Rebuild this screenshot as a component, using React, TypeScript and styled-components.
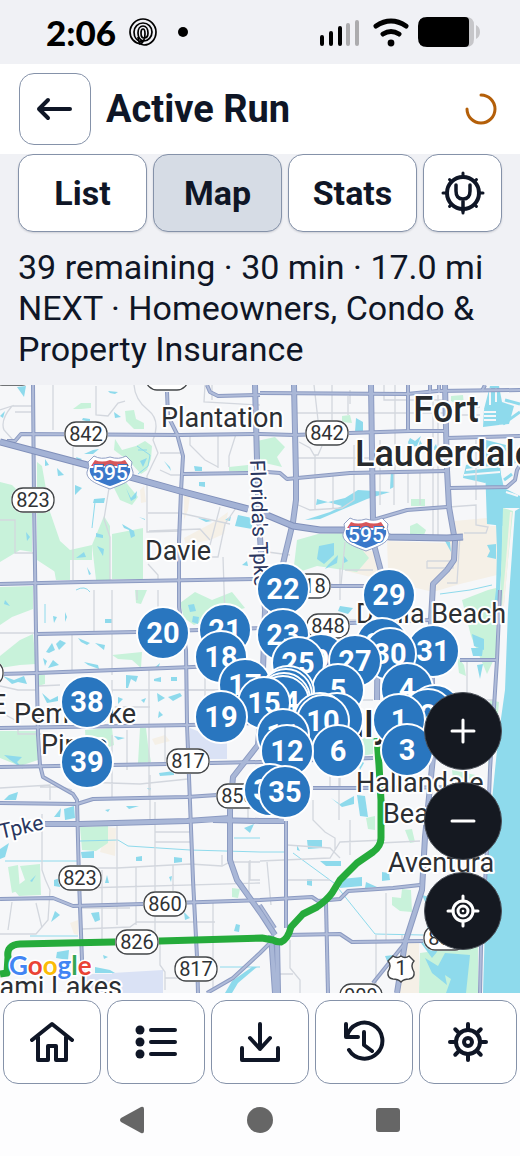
import React from "react";
import styled, { createGlobalStyle } from "styled-components";

const ink = "#0f1626";
const line = "#8592a9";

const GlobalStyle = createGlobalStyle`
  * { box-sizing: border-box; }
  body { margin: 0; background: #fdfdfe; color: ${ink}; font-family: Roboto, "Liberation Sans", sans-serif; }
  button { font: inherit; color: inherit; padding: 0; cursor: pointer; }
  svg { display: block; }
`;

const Screen = styled.div`
  display: flex;
  flex-direction: column;
  min-height: 100vh;
`;

const StatusBar = styled.div`
  display: flex;
  align-items: center;
  justify-content: space-between;
  height: 64px;
  padding: 0 40px 0 46px;
  background: #f0f1f5;
  color: #000;
`;

const StatusGroup = styled.div<{ $gap: number }>`
  display: flex;
  align-items: center;
  gap: ${(p) => p.$gap}px;
`;

const Clock = styled.span`
  font: 900 35px/40px Lato, sans-serif;
`;

const Header = styled.header`
  display: flex;
  align-items: center;
  gap: 15px;
  height: 90px;
  padding: 0 22px 0 19px;
  background: #fff;
`;

const Title = styled.h1`
  flex: 1;
  margin: 0;
  font-size: 38px;
  line-height: 44px;
  font-weight: 700;
`;

const OutlineButton = styled.button<{ $active?: boolean }>`
  display: flex;
  align-items: center;
  justify-content: center;
  border: 1px solid ${line};
  border-radius: 15px;
  background: ${(p) => (p.$active ? "#d6dce5" : "#fff")};
`;

const BackButton = styled(OutlineButton)`
  width: 72px;
  height: 72px;
`;

const Summary = styled.section`
  padding: 0 18px 15px;
  background: #f0f1f5;
`;

const Tabs = styled.nav`
  display: grid;
  grid-template-columns: repeat(3, 1fr) 79px;
  gap: 6px;
`;

const Tab = styled(OutlineButton)`
  height: 78px;
  font-size: 34px;
  font-weight: 700;
  box-shadow: 0 1px 2px rgba(15, 22, 38, 0.15);
`;

const Info = styled.p`
  margin: 15px 0 0;
  font-size: 34px;
  line-height: 41px;
`;

const MapArea = styled.main`
  position: relative;
  flex: 1;
  min-height: 420px;
  overflow: hidden;
  background: #f6f7f9;
`;

const MapDrawing = styled.svg`
  position: absolute;
  inset: 0;
  width: 100%;
  height: 100%;
`;

const Pin = styled.button`
  position: absolute;
  display: flex;
  align-items: center;
  justify-content: center;
  width: 54px;
  height: 54px;
  border: 2px solid #fff;
  border-radius: 50%;
  background: #2976bf;
  color: #fff;
  transform: translate(-50%, -50%);
  && { font-size: 29px; font-weight: 700; }
`;

const MapControls = styled.div`
  position: absolute;
  right: 18px;
  bottom: 43px;
  display: flex;
  flex-direction: column;
  gap: 12px;
`;

const RoundButton = styled.button`
  display: flex;
  align-items: center;
  justify-content: center;
  width: 78px;
  height: 78px;
  border: 1px solid #4a4f57;
  border-radius: 50%;
  background: #151921;
  && { color: #fff; }
`;

const BottomNav = styled.nav`
  display: grid;
  grid-template-columns: repeat(5, 1fr);
  gap: 6px;
  padding: 7px 3px 0;
  background: #fdfdfe;
`;

const NavButton = styled(OutlineButton)`
  height: 84px;
`;

const SystemBar = styled.div`
  display: flex;
  align-items: center;
  justify-content: center;
  gap: 88px;
  height: 72px;
  background: #fdfdfe;
`;

const SystemButton = styled.button`
  display: flex;
  width: 40px;
  height: 40px;
  align-items: center;
  justify-content: center;
  border: 0;
  background: none;
`;

/* ---------- map data ---------- */

const pins: [string, number, number][] = [
  ["22", 283, 589], ["29", 389, 595], ["21", 225, 630], ["20", 163, 633], ["23", 283, 635],
  ["28", 382, 644], ["31", 433, 651], ["30", 390, 654], ["18", 221, 657], ["27", 355, 661],
  ["9", 321, 660], ["25", 298, 663], ["17", 245, 685], ["4", 407, 689], ["5", 338, 690],
  ["24", 288, 692], ["16", 286, 695], ["13", 284, 699], ["14", 283, 702], ["38", 87, 702],
  ["15", 264, 703], ["33", 435, 711], ["2", 428, 715], ["19", 221, 717], ["7", 337, 719],
  ["8", 320, 719], ["1", 399, 720], ["10", 323, 721], ["11", 283, 735], ["3", 407, 750],
  ["6", 338, 751], ["12", 287, 751], ["39", 87, 762], ["34", 270, 790], ["35", 285, 792],
];
// Pins further south are drawn over the ones behind them.
const sortedPins = [...pins].sort((a, b) => a[2] - b[2]);

const greens = [
  "73,409 81,403 91,403 91,408 81,409", "125,411 134,410 136,419 144,423 144,429 134,429 126,421",
  "115,439 122,450 136,446 145,441 152,446 151,459 147,470 141,474 130,462 122,456 114,450",
  "0,482 12,485 32,505 32,552 20,550 0,562", "37,462 42,466 50,512 60,541 70,550 92,545 92,560 70,560 60,575 37,560",
  "112,484 124,480 138,497 132,505 120,500", "112,534 143,528 143,579 112,579", "104,516 110,526 110,580 96,580 92,545", "52,558 70,558 70,580 56,580", "229,467 248,465 248,471 229,471",
  "0,587 33,586 33,609 12,617 0,625", "0,656 20,640 33,634 36,664 20,665 0,668", "38,675 45,675 45,684 38,686",
  "135,590 147,590 141,604 136,603", "112,655 142,652 141,668 132,660 118,659",
  "0,731 36,731 38,760 20,766 0,758", "85,730 112,728 114,745 98,752 86,745", "140,728 146,728 148,745 151,762 138,763",
  "180,603 195,592 212,600 232,592 245,608 215,616 194,625 184,618", "257,441 275,437 285,447 277,457 282,467 265,463 257,456",
  "342,416 350,415 352,423 342,422", "451,396 463,395 464,405 458,405 451,401",
  "297,540 318,534 348,533 369,558 357,572 317,566 293,574",
  "411,499 425,499 425,506 411,506", "410,526 417,523 426,530 424,535 410,535", "462,600 488,590 496,588 496,655 487,674 471,636",
  "361,739 373,735 373,754 362,756", "457,656 464,665 466,676 459,673",
  "80,827 108,826 108,843 96,851 82,850", "8,867 18,865 20,890 12,893", "20,866 40,864 41,895 19,896 13,889 25,880",
  "232,888 240,889 238,898 232,897", "366,818 375,816 375,830 368,829", "405,830 412,829 415,842 410,843",
  "392,897 401,898 402,889 411,890 412,912 400,911 392,905", "420,953 478,945 478,993 419,993",
  "452,770 480,776 472,800 455,797", "490,700 499,702 495,750 488,770",
];

const beiges = [
  "387,541 447,543 454,521 487,518 490,526 497,526 497,575 460,584 433,592 346,571 352,545 374,552 382,570 388,568",
  "184,495 190,496 188,510 184,520", "214,522 228,512 224,534 210,540 186,545 184,538",
  "108,827 116,828 115,856 100,852", "405,942 419,940 419,993 398,993", "152,739 165,735 170,741 155,745",
  "140,490 144,486 146,502 141,503", "70,923 78,920 78,935 74,934",
];

const waters = [
  "17,387 26,386 24,397", "108,391 118,392 115,394 110,393", "0,416 5,411 3,418", "83,418 90,419 90,422 82,420", "114,412 121,417 115,418",
  "76,457 82,459 78,462", "84,454 93,450 99,449 93,454", "45,459 49,465 45,466", "57,468 64,475 58,476", "75,485 82,488 75,495",
  "94,499 105,498 104,503 93,503", "126,488 131,498 137,491 136,498 131,501", "164,461 170,467 171,471",
  "194,466 202,467 202,471 195,471", "199,482 205,482 205,487 199,486", "122,524 134,531 135,536 131,538 129,530 124,528",
  "139,517 145,520 145,519", "140,461 147,458 143,467", "96,533 103,535 103,538 96,537", "97,546 104,549 103,556",
  "76,558 84,552 86,557", "87,567 91,574 89,575", "26,532 30,537 27,541", "198,518 205,519 212,521 206,522",
  "225,520 231,516 230,521", "238,515 252,518 252,529 235,526", "242,565 247,561 248,566",
  "5,600 10,606 4,604", "53,616 57,617 54,623", "65,612 67,617 65,622", "105,619 112,619 112,623 105,623",
  "46,652 52,643 55,650 49,653", "56,644 60,640 66,643 59,650", "43,658 47,661 45,666", "48,668 53,660 59,665",
  "78,638 90,643 87,645 81,642", "95,643 105,645 104,650", "84,662 98,665 99,669 88,665",
  "188,605 194,604 196,611 190,612", "193,616 199,617 198,624 192,622", "3,676 14,680 24,676 27,684 18,682 12,684",
  "42,693 50,700 58,696 58,701 47,703", "126,675 138,676 136,682 131,679 128,688 126,688", "153,669 160,663 158,669",
  "154,679 161,677 161,682 154,681", "171,677 177,677 177,681 171,681", "118,697 123,699 118,704", "141,700 146,698 144,703",
  "157,693 165,698 158,702", "168,697 180,693 182,696 173,701", "158,718 163,715 159,711", "114,736 125,738 118,740",
  "4,755 22,757 17,762 23,769 10,760", "9,795 18,792 16,800 4,800", "159,773 174,771 174,775 160,776", "147,788 151,788 150,791",
  "54,817 61,808 60,817", "64,809 74,806 75,818 65,820", "105,810 110,809 108,812", "126,806 139,806 129,809",
  "0,849 9,843 5,857 0,859", "81,852 94,851 94,858 82,858", "136,857 142,856 142,861 136,861", "174,857 182,858 182,862 174,863",
  "107,875 109,883 105,883", "169,877 172,876 171,882", "30,881 36,875 32,882", "54,880 60,878 60,887 54,886",
  "51,922 55,911 60,915", "91,913 99,912 100,920 95,922", "184,912 190,918 185,920", "236,924 240,925 239,932 234,931",
  "57,952 69,950 68,960 56,958", "103,955 108,957 104,959", "95,967 110,970 115,973 95,973", "244,828 254,824 250,833",
  "317,499 316,505 345,498 358,490 390,492 367,499 353,505 320,519 305,520 330,512 342,506", "319,546 334,543 334,555 324,564 317,559",
  "344,556 348,561 344,563", "328,565 338,555 337,563 325,569", "356,418 363,422 363,431 355,432",
  "408,442 410,438 415,441 421,436 417,446 409,447", "432,450 436,444 438,450",
  "420,440 424,448 418,448", "391,470 394,472 394,487 390,489", "445,541 450,542 451,552",
  "490,386 499,386 502,402 514,406 509,424 497,425 488,424 484,409",
  "484,410 497,409 499,425 483,427", "486,440 506,445 504,460 488,465 480,455", "466,465 485,460 500,465 501,476 485,483 463,478",
  "485,466 500,470 504,488 520,496 520,508 503,508 503,526 487,524", "487,545 496,544 496,559 487,557 490,551",
  "496,524 503,510 502,560 500,590 496,622 492,622 496,590 497,550",
  "472,634 484,639 484,650 474,646", "471,648 483,648 482,656 473,656", "477,665 483,664 480,679",
  "340,606 353,608 348,614 338,611", "331,798 340,804 354,796 354,804 342,807", "357,757 364,763 360,770",
  "307,840 322,840 322,848 308,849", "297,845 300,851 297,850", "320,861 341,861 341,866 326,866",
  "307,879 312,879 312,886 307,885", "341,879 362,877 362,886 340,888", "366,882 377,887 365,888",
  "382,872 389,873 390,880 382,881", "385,956 394,955 394,961 387,961", "357,795 365,796 368,817 360,816",
  "425,958 438,966 445,953 470,955 466,993 446,993 451,979 445,975 447,985 432,973",
  "225,993 232,981 252,967 257,967 238,983 232,993",
];

const minorRoads = [
  "M53 385V430M73 440V580M96 386V415L108 416L118 403L125 401M134 385Q135 400 148 410T153 440L158 453Q152 465 147 476V532L180 531",
  "M12 406H33M0 410L12 406Q0 420 4 430L13 440M109 488L104 519L110 537V580M148 513H180L230 524M149 531L200 529L210 540",
  "M205 385L204 402L260 405M236 434L229 456V467M218 434V468M190 434V445L205 460L218 467M160 453H180M160 470L171 475H184",
  "M236 508L225 524L218 557H210M223 557L227 680M220 507L210 545M148 564L158 575V580M212 385V400",
  "M314 385L318 420M332 385V423M348 415V396M296 413H371M371 413H447M384 385V400H447M395 385V470M380 440V505M394 470V505M408 472V503M420 472V505M433 395V540M438 395V540",
  "M299 442L310 448L314 455H318L322 446M315 455V510M333 473V508M354 445V500L342 508L310 510L296 504M296 458H372",
  "M345 542L341 585M345 570H373M260 551L290 555M427 561H453V568H427V561M447 583H457L460 535M449 507L476 505V525L488 527L486 533H464",
  "M476 440V500M447 407H480M447 415H480M340 568V600M350 390V404",
  "M0 633H37M15 412H31M0 520H15V553H33M94 590V632M72 634V673M112 590V675M137 590V600M158 590V632",
  "M112 680V723M149 668V800M0 686L18 690H38M38 686L60 685M112 690H260M112 707H150M0 712L15 720M112 735V800M127 730V770M40 787H61L72 790M80 782L140 784L188 779M0 788L50 785V800",
  "M42 734H18V728M205 635V700M205 687V725M150 775V820M165 725V762M188 690H220",
  "M117 826V925M155 802V940M155 832H190M155 842H190M82 868H117L190 864L222 866L230 862H260M42 814V870Q45 880 50 890L48 920L36 934H0M8 930L12 902M36 903L42 928",
  "M83 888L260 883M136 867V925M173 865V900M82 929L130 927L137 922H215M213 902V990M160 941V965L165 972V990M82 908L130 908M102 870V940M183 940H250M195 978H165M222 865V855",
  "M248 790V820M249 861V899M260 880H250V860M313 800V820L325 832L335 838V850M350 820V855M260 861L330 858L340 842L385 840M340 700V790M339 757V820",
  "M280 800V820M267 862L271 905M290 940V968L300 980V993M386 893V940M376 935V993M402 935V950M287 845L330 848L340 858M280 974H293M287 880H330M380 843L420 841M402 940H425",
  "M467 660V750M460 700H495M460 720H495M320 620H380M315 700H373M306 780V800M330 745V790",
];

const majorRoads = [
  "M33 385L34 500L36 632L38 735L40 765L43 777L73 794L77 800L79 880L82 960L83 993",
  "M7 441H15L21 434L180 435L260 434L294 435L350 433L410 431L447 431",
  "M447 438L520 436",
  "M167 392L168 416L177 434L183 456L181 491L179 541V607L186 650L187 723L189 777L193 880L197 957L198 993",
  "M0 584L83 582L255 579L333 586L375 586",
  "M37 634L137 632L200 630L260 628L350 623L430 620",
  "M0 674L37 673L193 667L240 665",
  "M0 728L190 725L260 723",
  "M0 767L167 764L260 762L373 758",
  "M0 803L77 804L93 799L187 797L217 795",
  "M313 788H362L480 787",
  "M0 899L53 898L73 906L143 904L260 900L312 897L318 901L340 899L348 891L393 888L420 885",
  "M286 935L340 934L352 942L423 941",
  "M326 903L328 993",
  "M183 474L248 473",
  "M207 385L210 392L218 396L260 395",
  "M260 393L407 394L437 391L520 390",
  "M408 385V431M430 385V393M439 385V393",
  "M267 472L280 473L287 479L350 473L447 471",
  "M373 520L407 510L447 507",
  "M450 488L507 487L515 480L517 470L520 465",
  "M460 660H498",
  "M500 590L497 660L490 770L487 850L481 947L480 993",
  "M286 821V928",
  "M207 993L233 978L260 953L270 943",
  "M405 943L373 983",
  "M260 905L275 928",
  "M485 385L482 391",
];

const highways = [
  "M255 385L257 460L259 520L262 570L265 610L262 700L258 745L240 768L233 777L230 810V860L237 880L262 915L275 935",
  "M294 385L296 477V500L293 522L285 555L275 600",
  "M371 385L373 520L374 545L382 575L378 610L377 700",
  "M445 385L447 470L449 507L455 541L454 560L447 570L433 584L431 620L433 757L425 837L422 890L405 943L397 993",
  "M45 824L80 824L187 821L230 818M213 820L260 821H284",
  "M271 935L275 993M277 940L278 993",
];

const bigHighways = ["M0 442L87 465L180 491L248 509", "M262 513L293 526L320 530L347 530L390 537L447 538L463 537"];

const shields: [string, number, number][] = [
  ["823", 12, 373], ["842", 86, 434], ["817", 167, 378], ["823", 33, 500], ["842", 327, 433], ["818", 309, 586],
  ["848", 328, 626], ["817", 188, 761], ["858", 238, 796], ["823", 80, 878], ["860", 165, 904], ["826", 137, 942],
  ["817", 196, 969], ["856", 445, 938], ["909", 361, 996], ["820", -18, 673],
];

const towns: [string, number, number][] = [
  ["Plantation", 161, 427], ["Davie", 145, 560], ["Dania Beach", 356, 623], ["Pembroke", 14, 723],
  ["Pines", 41, 754], ["Hallandale", 356, 792], ["Beach", 383, 823], ["Aventura", 388, 872],
];

function Interstate({ x, y }: { x: number; y: number }) {
  return (
    <g transform={`translate(${x} ${y})`}>
      <path d="M-16 -16Q-9 -12 0 -15Q9 -12 16 -16L22 -10Q20 -6 23 0C24 9 10 13 0 17C-10 13 -24 9 -23 0Q-20 -6 -22 -10Z" fill="#fff" stroke="#91a0c5" strokeWidth="1" />
      <path d="M-15 -12Q-8 -9 0 -12Q8 -9 15 -12L19 -6H-19Z" fill="#d7575a" />
      <path d="M-20 -4H20C22 6 10 11 0 14C-10 11 -22 6 -20 -4Z" fill="#3a78ca" />
      <text y="8" textAnchor="middle" fontSize="21" fontWeight="500" fill="#fff" stroke="#3a78ca" strokeWidth="2" paintOrder="stroke">595</text>
    </g>
  );
}

function CityMap() {
  return (
    <MapDrawing viewBox="0 385 520 608" preserveAspectRatio="xMidYMid slice" role="img" aria-label="Route map" fontFamily="Roboto, sans-serif">
      <rect x="-400" y="0" width="1320" height="1800" fill="#f6f7f9" />
      <g fill="#f5f0e7">{beiges.map((p) => <polygon key={p} points={p} />)}</g>
      <g fill="#c8f2da">{greens.map((p) => <polygon key={p} points={p} />)}</g>
      <path d="M190 728L227 743V759H190ZM112 973L163 970V993H112ZM80 974H112V993H84Z" fill="#dae2f5" />
      <g fill="#8edaec">
        <path d="M920 385V993H483L487 857L492 800L498 740L505 690L508 610L515 511L520 508V385Z" />
        <path d="M422 895Q435 920 421 943L432 958Q450 940 440 900Z" />
        {waters.map((p) => <polygon key={p} points={p} />)}
      </g>
      <path d="M503 508L513 511L508 560L504 604L500 606Z" fill="#c8f2da" />
      <path d="M511 512L507 560L503 606" fill="none" stroke="#f5f0e7" strokeWidth="2" />
      <path d="M484 412H496M484 416H496M484 420H496M466 470L498 466M464 475L500 472M488 450L502 447M488 456L502 453M490 405V388M496 402V388M506 492L518 496" stroke="#f6f7f9" strokeWidth="2" />
      <path d="M503 424L520 412M506 448L514 462L520 458M504 480L512 474M505 400L520 404" fill="none" stroke="#8edaec" strokeWidth="3" />
      <path d="M5 861H78M80 841L118 840L128 846L190 850L260 852M30 936H78M260 852H287M293 853L334 883L375 934L423 935M45 604V623M220 967H260M440 594L470 590L492 585M234 838H260M95 502L92 528" fill="none" stroke="#8edaec" strokeWidth="1" />
      <path d="M138 450L147 450M76 590Q85 585 90 592M137 446L150 455L148 466L138 474" fill="none" stroke="#8edaec" strokeWidth="1" />

      <g fill="none" stroke="#d3d7de" strokeWidth="1.3">{minorRoads.map((d) => <path key={d} d={d} />)}</g>
      <g fill="none" strokeLinejoin="round">
        {majorRoads.map((d) => <path key={d} d={d} stroke="#8c9bc2" strokeWidth="4" />)}
        {highways.map((d) => <path key={d} d={d} stroke="#8c9bc2" strokeWidth="6" />)}
        {majorRoads.map((d) => <path key={d} d={d} stroke="#b0bcd9" strokeWidth="2" />)}
        {highways.map((d) => <path key={d} d={d} stroke="#a9b7d7" strokeWidth="4" />)}
        {bigHighways.map((d) => <path key={d} d={d} stroke="#8090ba" strokeWidth="7" />)}
        {bigHighways.map((d) => <path key={d} d={d} stroke="#a3b2d5" strokeWidth="5" />)}
      </g>
      <path d="M377 738L379 765L381 800V838Q381 846 373 852L357 863L340 880L332 893Q327 900 317 907L303 914L291 927Q288 939 281 942Q276 942 273 940L262 938L160 941L20 944Q6 945 8 957L7 973L0 974" fill="none" stroke="#25ab3b" strokeWidth="7" strokeLinejoin="round" />

      {shields.map(([label, x, y], i) => (
        <g key={i}>
          <rect x={x - 22} y={y - 13} width="44" height="26" rx="12" fill="#fff" />
          <rect x={x - 21} y={y - 12} width="42" height="24" rx="11" fill="#fff" stroke="#424548" strokeWidth="1.3" />
          <text x={x} y={y + 7} textAnchor="middle" fontSize="20" fill="#2f3235">{label}</text>
        </g>
      ))}
      <Interstate x={110} y={472} />
      <Interstate x={366} y={534} />
      <g transform="translate(401 968)">
        <path d="M-8 -12Q-4 -9 0 -12Q4 -9 8 -12L13 -7Q9 -3 13 4Q14 10 8 11Q3 11 0 14Q-3 11 -8 11Q-14 10 -13 4Q-9 -3 -13 -7Z" fill="#fff" stroke="#424548" strokeWidth="1.4" />
        <text y="7" textAnchor="middle" fontSize="20" fill="#2f3235">1</text>
      </g>

      <g stroke="#fff" strokeWidth="4" strokeLinejoin="round" paintOrder="stroke" fill="#2c2f33" fontSize="27">
        {towns.map(([label, x, y]) => <text key={label} x={x} y={y}>{label}</text>)}
        <text x="6" y="714" textAnchor="end">E</text>
        <text x="122" y="996" textAnchor="end">Miami Lakes</text>
        <g fontSize="36" fontWeight="500" fill="#26292c">
          <text x="446" y="422" textAnchor="middle">Fort</text>
          <text x="355" y="466">Lauderdale</text>
          <text x="309" y="737">Hollywood</text>
        </g>
        <g fontSize="21" fill="#2b3761">
          <text transform="translate(250 460) rotate(88)">Florida's Tpke</text>
          <text transform="translate(1 839) rotate(-13)">Tpke</text>
        </g>
      </g>
      <g fontFamily="Lato, sans-serif" fontSize="26" fontWeight="700" stroke="#fff" strokeWidth="3" paintOrder="stroke">
        <text x="9" y="975">
          <tspan fill="#4285f4">G</tspan><tspan fill="#ea4335">o</tspan><tspan fill="#fbbc05">o</tspan><tspan fill="#4285f4">g</tspan><tspan fill="#34a853">l</tspan><tspan fill="#ea4335">e</tspan>
        </text>
      </g>
    </MapDrawing>
  );
}

/* ---------- icons ---------- */

const Icon = ({ size = 44, width = 4, children }: { size?: number; width?: number; children: React.ReactNode }) => (
  <svg width={size} height={size} viewBox={`0 0 ${size} ${size}`} fill="none" stroke="currentColor" strokeWidth={width} strokeLinecap="round" strokeLinejoin="round" aria-hidden="true">
    {children}
  </svg>
);

const spokes = (cx: number, inner: number, outer: number, diag: number) =>
  [0, 45, 90, 135, 180, 225, 270, 315].map((a) => (
    <path key={a} d={`M${cx} ${cx - inner}V${cx - (a % 90 ? diag : outer)}`} transform={`rotate(${a} ${cx} ${cx})`} />
  ));

export default function App() {
  return (
    <Screen>
      <GlobalStyle />
      <StatusBar>
        <StatusGroup $gap={13}>
          <Clock>2:06</Clock>
          <svg width="28" height="28" viewBox="0 0 28 28" fill="none" stroke="#000" strokeWidth="1.7" aria-hidden="true">
            <path d="M12 26C5 25 1 20 1 14C1 7 7 1 14 1S27 7 27 14S22 27 15 27C11 27 9 23 9 19" />
            <path d="M13 24C7 23 5 18 5 14C5 9 9 5 14 5S23 9 23 14C23 19 19 23 15 23C11 23 9 19 9 15C9 11 11 8 14 8S19 11 19 15S17 20 15 20S12 18 12 15S13 11 14 11S16 13 16 16C16 21 14 26 10 26" />
          </svg>
          <svg width="28" height="28" viewBox="0 0 28 28" aria-hidden="true"><circle cx="13" cy="14" r="5" /></svg>
        </StatusGroup>
        <StatusGroup $gap={9}>
          <svg width="46" height="32" viewBox="0 0 46 32" strokeWidth="4" strokeLinecap="round" aria-hidden="true">
            <path d="M4 21V28M13 17V28M22 12V28" stroke="#000" />
            <path d="M30 9V28M39 6V28" stroke="#acacae" />
          </svg>
          <svg width="36" height="32" viewBox="0 0 36 32" fill="none" stroke="#000" strokeWidth="5" strokeLinecap="round" aria-hidden="true">
            <path d="M3 10Q18 0 33 10M10 18Q18 13 26 18" />
            <circle cx="18" cy="27" r="3.4" fill="#000" stroke="none" />
          </svg>
          <svg width="62" height="32" viewBox="0 0 62 32" aria-hidden="true">
            <path d="M48 1Q56 1 56 9V23Q56 31 48 31ZM58 9Q62 11 62 16T58 23Z" fill="#c6c6c9" />
            <path d="M9 1H47Q51 1 51 5V27Q51 31 47 31H9Q0 31 0 22V10Q0 1 9 1Z" />
          </svg>
        </StatusGroup>
      </StatusBar>

      <Header>
        <BackButton aria-label="Back">
          <Icon><path d="M37 22H6M15 13L6 22L15 31" /></Icon>
        </BackButton>
        <Title>Active Run</Title>
        <svg width="34" height="34" viewBox="0 0 34 34" fill="none" stroke="#b45f09" strokeWidth="3" strokeLinecap="round" role="img" aria-label="Loading">
          <path d="M17 3A14 14 0 1 1 3 17" />
        </svg>
      </Header>

      <Summary>
        <Tabs aria-label="Run views">
          <Tab>List</Tab>
          <Tab $active aria-current="page">Map</Tab>
          <Tab>Stats</Tab>
          <Tab aria-label="Navigation options">
            <Icon width={4}>
              <circle cx="22" cy="22" r="16" />
              <g strokeWidth="3">{spokes(22, 16, 20, 19)}</g>
              <path d="M15 14V20Q15 28 22 28T29 20V14M22 28V40" strokeWidth="3.5" />
            </Icon>
          </Tab>
        </Tabs>
        <Info>
          39 remaining · 30 min · 17.0 mi
          <br />
          NEXT · Homeowners, Condo &amp; Property Insurance
        </Info>
      </Summary>

      <MapArea>
        <CityMap />
        {sortedPins.map(([label, x, y]) => (
          <Pin key={label} aria-label={`Stop ${label}`} style={{ left: `${(x / 520) * 100}%`, top: `${((y - 385) / 608) * 100}%` }}>
            {label}
          </Pin>
        ))}
        <MapControls>
          <RoundButton aria-label="Zoom in">
            <Icon><path d="M11 22H33M22 11V33" strokeWidth="3" /></Icon>
          </RoundButton>
          <RoundButton aria-label="Zoom out">
            <Icon><path d="M11 22H33" strokeWidth="3" /></Icon>
          </RoundButton>
          <RoundButton aria-label="Centre on my location">
            <Icon width={3}>
              <circle cx="22" cy="22" r="10" />
              <circle cx="22" cy="22" r="5" />
              <circle cx="22" cy="22" r="1.3" fill="currentColor" stroke="none" />
              <path d="M22 7V12M22 32V37M7 22H12M32 22H37" />
            </Icon>
          </RoundButton>
        </MapControls>
      </MapArea>

      <BottomNav aria-label="Main">
        <NavButton aria-label="Home">
          <Icon><path d="M2 20L22 4L42 20M8 17V40H18V26H26V40H36V17" /></Icon>
        </NavButton>
        <NavButton aria-label="List">
          <Icon>
            <path d="M17 10H41M17 22H41M17 34H41" />
            <g fill="currentColor" stroke="none"><circle cx="6" cy="10" r="4.5" /><circle cx="6" cy="22" r="4.5" /><circle cx="6" cy="34" r="4.5" /></g>
          </Icon>
        </NavButton>
        <NavButton aria-label="Download">
          <Icon><path d="M22 4V29M12 18L22 29L32 18M4 28V40H40V28" /></Icon>
        </NavButton>
        <NavButton aria-label="History">
          <Icon><path d="M4 4V17H16M5 16A18 18 0 1 1 7 30M22 12V25L30 31" /></Icon>
        </NavButton>
        <NavButton aria-label="Settings">
          <Icon>
            <circle cx="22" cy="22" r="12" />
            <circle cx="22" cy="22" r="4" />
            {spokes(22, 13, 18, 18)}
          </Icon>
        </NavButton>
      </BottomNav>

      <SystemBar>
        <SystemButton aria-label="System back">
          <svg width="26" height="28" viewBox="0 0 26 28" fill="#666"><path d="M2 12L22 1Q25 0 25 3V25Q25 28 22 27L2 16Q0 14 2 12Z" /></svg>
        </SystemButton>
        <SystemButton aria-label="System home">
          <svg width="26" height="26" viewBox="0 0 26 26" fill="#666"><circle cx="13" cy="13" r="13" /></svg>
        </SystemButton>
        <SystemButton aria-label="Recent apps">
          <svg width="24" height="24" viewBox="0 0 24 24" fill="#666"><rect width="24" height="24" rx="3" /></svg>
        </SystemButton>
      </SystemBar>
    </Screen>
  );
}
